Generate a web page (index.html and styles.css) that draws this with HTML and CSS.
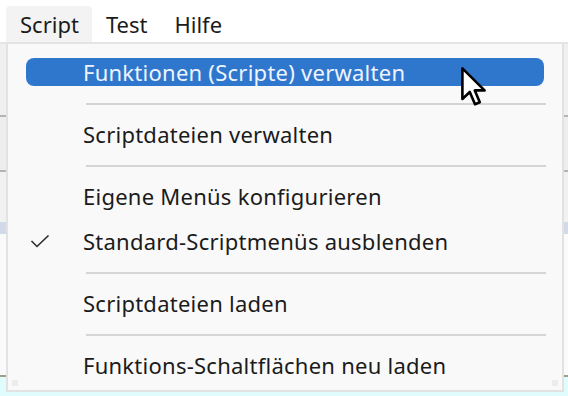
FILE: index.html
```html
<!DOCTYPE html>
<html lang="de">
<head>
    <meta charset="UTF-8">
    <title>Script-Menü</title>
    <link rel="stylesheet" href="styles.css">
</head>
<body>
    <div class="window">
        <div class="menubar">
            <div class="menubar-item active">Script</div>
            <div class="menubar-item">Test</div>
            <div class="menubar-item">Hilfe</div>
        </div>
        <div class="menubar-rule"></div>

        <!-- window content behind the open menu -->
        <div class="backdrop">
            <div class="band band-toolbar"></div>
            <div class="band-line"></div>
            <div class="band band-tabs"></div>
            <div class="band-line"></div>
            <div class="band band-header"></div>
            <div class="band band-selected"></div>
            <div class="band band-body"></div>
            <div class="band-line dark"></div>
            <div class="band band-status"></div>
        </div>

        <div class="popup">
            <div class="menu-item highlighted">Funktionen (Scripte) verwalten</div>
            <div class="menu-separator"></div>
            <div class="menu-item">Scriptdateien verwalten</div>
            <div class="menu-separator"></div>
            <div class="menu-item">Eigene Menüs konfigurieren</div>
            <div class="menu-item checked">
                <svg class="check" width="20" height="14" viewBox="0 0 20 14">
                    <path d="M1.5 7 L7 12.5 L18.5 1.5" fill="none" stroke="#2b2b2b" stroke-width="1.6"/>
                </svg>
                Standard-Scriptmenüs ausblenden
            </div>
            <div class="menu-separator"></div>
            <div class="menu-item">Scriptdateien laden</div>
            <div class="menu-separator"></div>
            <div class="menu-item">Funktions-Schaltflächen neu laden</div>
            <span class="grip grip-left"></span>
            <span class="grip grip-right"></span>
        </div>

        <svg class="cursor" width="26" height="40" viewBox="0 0 13 20">
            <path d="M0.7 0.7 L0.7 16 L4.4 12.5 L7 18.6 L9.4 17.6 L6.9 11.7 L11.8 11.7 Z" fill="#fff" stroke="#000" stroke-width="1.3" stroke-linejoin="round"/>
        </svg>
    </div>
</body>
</html>
```

FILE: styles.css
```css
* {
    box-sizing: border-box;
}

body {
    margin: 0;
    font-family: "Noto Sans", "Open Sans", Arial, sans-serif;
    font-size: 22px;
    color: #1b1b1b;
    background: #fff;
}

.window {
    position: relative;
    width: 568px;
    height: 396px;
    overflow: hidden;
    display: flex;
    flex-direction: column;
}

.menubar {
    height: 42px;
    padding: 6px 0 0 6px;
    display: flex;
    background: #fff;
}

.menubar-item {
    height: 36px;
    line-height: 36px;
    padding: 0 13px 0 14px;
    border-radius: 4px 4px 0 0;
}

    .menubar-item.active {
        background: #f3f3f3;
    }

.menubar-rule {
    height: 2px;
    background: #e4e4e4;
}

.backdrop {
    flex: 1;
    display: flex;
    flex-direction: column;
}

.band-line {
    height: 2px;
    background: #b4b4b4;
}

    .band-line.dark {
        background: #a19d8e;
    }

.band-toolbar {
    height: 71px;
    background: #f0f0f0;
}

.band-tabs {
    height: 53px;
    background: #eeeeee;
}

.band-header {
    height: 50px;
    background: #f1f1f1;
}

.band-selected {
    height: 12px;
    background: #d2d9e8;
}

.band-body {
    height: 141px;
    background: #fafafa;
}

.band-status {
    flex: 1;
    background: #e0fcfc;
}

.popup {
    position: absolute;
    left: 6px;
    top: 44px;
    width: 558px;
    height: 348px;
    padding: 6px 0 2px;
    background: #f9f9f9;
    border: 2px solid #e2e2e2;
    border-top: none;
    display: flex;
    flex-direction: column;
}

.menu-item {
    position: relative;
    isolation: isolate;
    height: 45px;
    line-height: 45px;
    padding-left: 75px;
    letter-spacing: 0.25px;
    white-space: nowrap;
}

    .menu-item.highlighted {
        color: #eef4ff;
    }

        .menu-item.highlighted::before {
            content: "";
            position: absolute;
            left: 18px;
            right: 18px;
            top: 8px;
            height: 28px;
            background: #2f77cd;
            border-radius: 8px;
            z-index: -1;
        }

.check {
    position: absolute;
    left: 22px;
    top: 15px;
}

.menu-separator {
    height: 17px;
    display: flex;
    align-items: center;
    padding: 0 16px 0 78px;
}

    .menu-separator::after {
        content: "";
        flex: 1;
        height: 2px;
        background: #d5d5d5;
    }

.grip {
    position: absolute;
    bottom: 4px;
    width: 6px;
    height: 6px;
    background: #ececec;
}

.grip-left {
    left: 4px;
}

.grip-right {
    right: 4px;
}

.cursor {
    position: absolute;
    left: 461px;
    top: 67px;
}
```
